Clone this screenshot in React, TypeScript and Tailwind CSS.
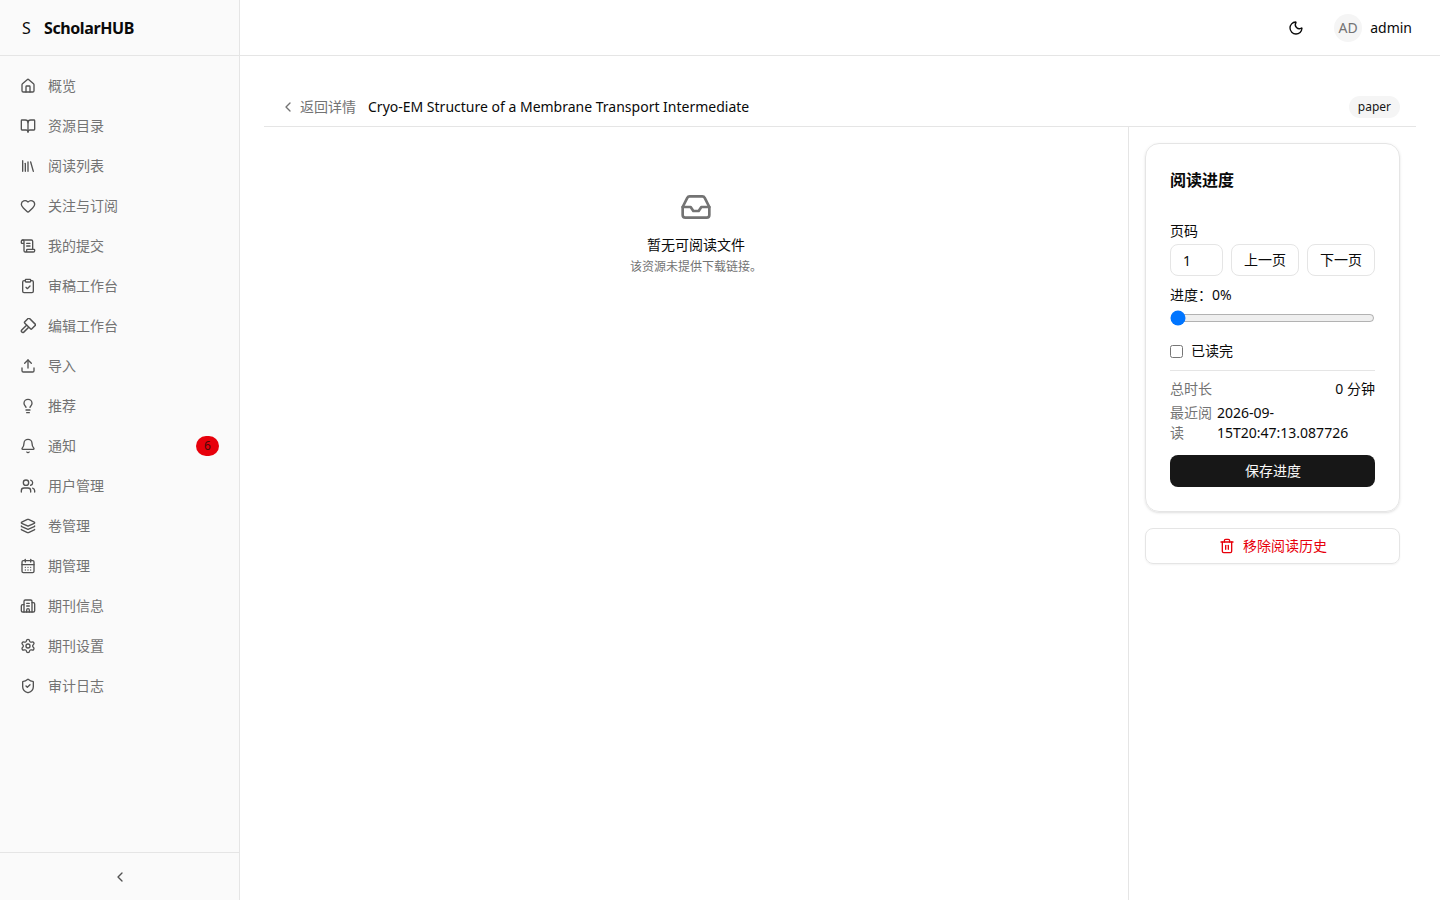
import {
  Bell,
  BookOpen,
  Building2,
  CalendarDays,
  ChevronLeft,
  ClipboardCheck,
  Heart,
  House,
  Inbox,
  Layers,
  Library,
  Lightbulb,
  Moon,
  ScrollText,
  Settings,
  ShieldCheck,
  Trash2,
  Upload,
  Users,
} from "lucide-react";

function GavelIcon({ size = 16, className = "" }: { size?: number; className?: string }) {
  return (
    <svg
      width={size}
      height={size}
      viewBox="0 0 24 24"
      fill="none"
      stroke="currentColor"
      strokeWidth={2.2}
      strokeLinecap="round"
      strokeLinejoin="round"
      className={className}
    >
      <rect x="7.5" y="3.5" width="15" height="10" rx="1.5" transform="rotate(45 15 8.5)" />
      <path d="M9.9 10.8 2.6 18.1a2.2 2.2 0 0 0 3.1 3.1l7-7" />
    </svg>
  );
}

const navItems = [
  { label: "概览", icon: House },
  { label: "资源目录", icon: BookOpen },
  { label: "阅读列表", icon: Library },
  { label: "关注与订阅", icon: Heart },
  { label: "我的提交", icon: ScrollText },
  { label: "审稿工作台", icon: ClipboardCheck },
  { label: "编辑工作台", icon: GavelIcon },
  { label: "导入", icon: Upload },
  { label: "推荐", icon: Lightbulb },
  { label: "通知", icon: Bell, badge: 6 },
  { label: "用户管理", icon: Users },
  { label: "卷管理", icon: Layers },
  { label: "期管理", icon: CalendarDays },
  { label: "期刊信息", icon: Building2 },
  { label: "期刊设置", icon: Settings },
  { label: "审计日志", icon: ShieldCheck },
];

function Sidebar() {
  return (
    <aside className="flex h-full w-[240px] shrink-0 flex-col border-r border-[#e5e5e5] bg-[#fafafa]">
      <div className="flex h-[56px] shrink-0 items-center border-b border-[#e5e5e5] pl-[22px]">
        <span className="w-[22px] text-base text-[#0a0a0a]">S</span>
        <span className="text-base font-bold tracking-tight text-[#0a0a0a]">ScholarHUB</span>
      </div>
      <nav className="flex-1 pt-[10px]">
        {navItems.map((item) => (
          <a key={item.label} className="flex h-[40px] items-center pl-[20px] pr-[20px] text-sm text-[#737373]">
            <item.icon size={16} className="mr-[12px] shrink-0 text-[#525252]" />
            <span className="flex-1">{item.label}</span>
            {item.badge && (
              <span className="flex h-[20px] w-[23px] items-center justify-center rounded-full bg-[#e7000b] text-xs text-[#4a0a0a]">
                {item.badge}
              </span>
            )}
          </a>
        ))}
      </nav>
      <div className="flex h-[48px] shrink-0 items-center justify-center border-t border-[#e5e5e5] text-[#525252]">
        <ChevronLeft size={16} />
      </div>
    </aside>
  );
}

function TopBar() {
  return (
    <header className="flex h-[56px] shrink-0 items-center justify-end border-b border-[#e5e5e5] pr-[28px]">
      <Moon size={16} className="text-[#0a0a0a]" />
      <div className="ml-[30px] flex h-[28px] w-[28px] items-center justify-center rounded-full bg-[#f5f5f5] text-sm text-[#737373]">
        AD
      </div>
      <span className="ml-[8px] text-sm text-[#0a0a0a]">admin</span>
    </header>
  );
}

function ProgressCard() {
  return (
    <div className="h-[369px] rounded-[14px] border border-[#e5e5e5] px-[24px] pt-[24px] shadow-sm">
      <h2 className="text-base font-bold leading-[24px] text-[#0a0a0a]">阅读进度</h2>
      <div className="mt-[28px] text-sm leading-[22px] text-[#0a0a0a]">页码</div>
      <div className="mt-[2px] flex gap-[8px]">
        <input
          defaultValue="1"
          className="h-[32px] w-[53px] rounded-[8px] border border-[#e5e5e5] px-[12px] text-sm text-[#0a0a0a]"
        />
        <button className="h-[32px] w-[68px] rounded-[8px] border border-[#e5e5e5] text-sm text-[#0a0a0a]">上一页</button>
        <button className="h-[32px] w-[68px] rounded-[8px] border border-[#e5e5e5] text-sm text-[#0a0a0a]">下一页</button>
      </div>
      <div className="mt-[8px] text-sm leading-[22px] text-[#0a0a0a]">进度：0%</div>
      <input type="range" min={0} max={100} defaultValue={0} className="mt-[4px] block h-[16px] w-full" />
      <label className="mt-[14px] flex h-[22px] items-center text-sm text-[#0a0a0a]">
        <input type="checkbox" className="m-0 mr-[8px] h-[13px] w-[13px]" />
        已读完
      </label>
      <div className="mt-[8px] border-t border-[#e5e5e5] pt-[8px]">
        <div className="flex justify-between text-sm leading-[20px]">
          <span className="text-[#737373]">总时长</span>
          <span className="text-[#0a0a0a]">0 分钟</span>
        </div>
        <div className="mt-[4px] flex text-sm leading-[20px]">
          <span className="w-[42px] shrink-0 text-[#737373]">最近阅读</span>
          <span className="ml-[5px] text-[#0a0a0a] [overflow-wrap:anywhere]">
            2026-09-
            <br />
            15T20:47:13.087726
          </span>
        </div>
      </div>
      <button className="mt-[12px] h-[32px] w-full rounded-[8px] bg-[#171717] pl-[1px] text-sm text-[#fafafa]">保存进度</button>
    </div>
  );
}

export default function App() {
  return (
    <div className="flex h-[900px] w-full overflow-hidden bg-white font-['Noto_Sans','Noto_Sans_CJK_SC',sans-serif]">
      <Sidebar />
      <div className="flex min-w-0 flex-1 flex-col">
        <TopBar />
        <main className="flex min-h-0 flex-1 flex-col px-[24px] pt-[24px]">
          <div className="flex h-[47px] shrink-0 items-center justify-between border-b border-[#e5e5e5] pl-[16px] pr-[16px] pt-[8px]">
            <div className="flex items-center text-sm">
              <ChevronLeft size={16} className="text-[#737373]" />
              <span className="ml-[4px] text-[#737373]">返回详情</span>
              <span className="ml-[12px] text-[#0a0a0a]">Cryo-EM Structure of a Membrane Transport Intermediate</span>
            </div>
            <span className="flex h-[22px] items-center rounded-full bg-[#f5f5f5] px-[9px] text-xs text-[#171717]">paper</span>
          </div>
          <div className="flex min-h-0 flex-1">
            <section className="flex flex-1 flex-col items-center pt-[64px]">
              <Inbox size={32} strokeWidth={2} className="text-[#737373]" />
              <div className="mt-[12px] text-sm leading-[20px] text-[#0a0a0a]">暂无可阅读文件</div>
              <div className="mt-[4px] text-xs leading-[16px] text-[#737373]">该资源未提供下载链接。</div>
            </section>
            <aside className="w-[288px] shrink-0 border-l border-[#e5e5e5] pl-[16px] pr-[16px] pt-[16px]">
              <ProgressCard />
              <button className="mt-[16px] flex h-[36px] w-full items-center justify-center gap-[8px] rounded-[8px] border border-[#e5e5e5] pl-[1px] text-sm text-[#e7000b] shadow-xs">
                <Trash2 size={16} />
                移除阅读历史
              </button>
            </aside>
          </div>
        </main>
      </div>
    </div>
  );
}
